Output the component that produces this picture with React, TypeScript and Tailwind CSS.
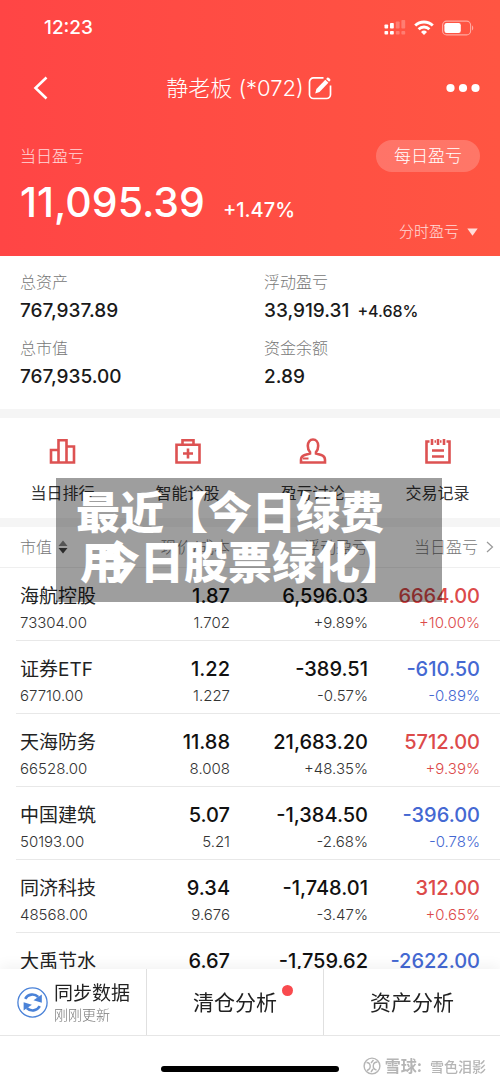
import type { ReactNode } from "react";
import clsx from "clsx";

type Tone = "up" | "down";

type Holding = {
  name: string;
  value: string;
  price: string;
  cost: string;
  pnl: string;
  pnlRate: string;
  day: string;
  dayRate: string;
  tone: Tone;
};

const holdings: Holding[] = [
  { name: "海航控股", value: "73304.00", price: "1.87", cost: "1.702", pnl: "6,596.03", pnlRate: "+9.89%", day: "6664.00", dayRate: "+10.00%", tone: "up" },
  { name: "证券ETF", value: "67710.00", price: "1.22", cost: "1.227", pnl: "-389.51", pnlRate: "-0.57%", day: "-610.50", dayRate: "-0.89%", tone: "down" },
  { name: "天海防务", value: "66528.00", price: "11.88", cost: "8.008", pnl: "21,683.20", pnlRate: "+48.35%", day: "5712.00", dayRate: "+9.39%", tone: "up" },
  { name: "中国建筑", value: "50193.00", price: "5.07", cost: "5.21", pnl: "-1,384.50", pnlRate: "-2.68%", day: "-396.00", dayRate: "-0.78%", tone: "down" },
  { name: "同济科技", value: "48568.00", price: "9.34", cost: "9.676", pnl: "-1,748.01", pnlRate: "-3.47%", day: "312.00", dayRate: "+0.65%", tone: "up" },
  { name: "大禹节水", value: "", price: "6.67", cost: "", pnl: "-1,759.62", pnlRate: "", day: "-2622.00", dayRate: "", tone: "down" },
];

function StatusBar() {
  return (
    <div className="flex h-14 items-center justify-between pl-11 pr-[26px]">
      <span className="text-[19px] font-medium">12:23</span>
      <div className="flex items-center gap-2">
        <svg width="22" height="16" viewBox="0 0 22 16" fill="currentColor">
          <rect x="0.5" y="4.5" width="3.6" height="4" rx="0.8" />
          <rect x="6" y="3" width="3.8" height="5.5" rx="0.8" />
          <rect x="11.8" y="1.5" width="3.8" height="7" rx="0.8" opacity="0.25" />
          <rect x="17.4" y="0" width="3.8" height="8.5" rx="0.8" opacity="0.25" />
          <rect x="0.5" y="11" width="3.6" height="3.6" rx="0.8" />
          <rect x="6" y="11" width="3.8" height="3.6" rx="0.8" />
          <rect x="11.8" y="11" width="3.8" height="3.6" rx="0.8" opacity="0.25" />
          <rect x="17.4" y="11" width="3.8" height="3.6" rx="0.8" opacity="0.25" />
        </svg>
        <svg width="20" height="16" viewBox="0 0 20 16" fill="none" stroke="currentColor" strokeWidth="2.8">
          <path d="M1.2 5.6a12.5 12.5 0 0 1 17.6 0" />
          <path d="M4.6 9.2a7.7 7.7 0 0 1 10.8 0" />
          <path d="M10 15l-3-3a4.3 4.3 0 0 1 6 0z" fill="currentColor" stroke="none" />
        </svg>
        <svg width="32" height="16" viewBox="0 0 32 16" fill="none">
          <rect x="0.6" y="1.1" width="28" height="13.8" rx="4" stroke="currentColor" strokeOpacity="0.5" strokeWidth="1.1" />
          <rect x="2.4" y="3" width="16.4" height="10" rx="2.2" fill="currentColor" />
          <path d="M30 5.6c1.6.6 1.6 4.2 0 4.8z" fill="currentColor" fillOpacity="0.5" />
        </svg>
      </div>
    </div>
  );
}

function NavBar() {
  return (
    <div className="flex h-16 items-center justify-between pl-8 pr-5">
      <button type="button" aria-label="返回" className="w-12">
        <svg width="18" height="26" viewBox="0 0 18 26" fill="none" stroke="currentColor" strokeWidth="2.6">
          <path d="M14.5 2.5L3.5 13l11 10.5" />
        </svg>
      </button>
      <div className="flex items-center gap-1">
        <h1 className="text-[22px] font-light leading-8">静老板 (*072)</h1>
        <button type="button" aria-label="编辑">
          <svg width="24" height="24" viewBox="0 0 24 24" fill="none">
            <path
              d="M15.5 1.9H5.5A4 4 0 0 0 1.500 5.9v12.6a4 4 0 0 0 4 4h13a4 4 0 0 0 4-4V9.5"
              stroke="currentColor"
              strokeWidth="1.7"
            />
            <path d="M7.2 17.5l1.2-4.4L17.3 3.8l3.1 3-8.9 9.2z" fill="currentColor" />
            <path d="M18.1 2.9l.9-1c.7-.7 1.4-.6 2 0l1 1c.6.6.6 1.3 0 1.9l-.9 1z" fill="currentColor" />
          </svg>
        </button>
      </div>
      <button type="button" aria-label="更多" className="flex w-[62px] justify-end">
        <svg width="34" height="10" viewBox="0 0 34 10" fill="currentColor">
          <circle cx="4.5" cy="5" r="4.1" />
          <circle cx="17" cy="5" r="4.1" />
          <circle cx="29.5" cy="5" r="4.1" />
        </svg>
      </button>
    </div>
  );
}

function Stat({ label, value, extra }: { label: string; value: string; extra?: string }) {
  return (
    <div>
      <dt className="text-[16px] font-light leading-6 text-[#777]">{label}</dt>
      <dd className="mt-[3px] text-[19px] font-medium leading-7 text-[#1a1a1a]">
        {value}
        {extra ? <span className="ml-2 text-[16px]">{extra}</span> : null}
      </dd>
    </div>
  );
}

function QuickAction({ label, children }: { label: string; children: ReactNode }) {
  return (
    <button type="button" className="flex flex-1 flex-col items-center justify-start gap-4">
      <svg width="28" height="28" viewBox="0 0 28 28" fill="none" stroke="#dd5252" strokeWidth="2.6">
        {children}
      </svg>
      <span className="text-[16px] leading-6 text-[#333]">{label}</span>
    </button>
  );
}

function Cell({ main, sub, tone, className }: { main: string; sub: string; tone?: Tone; className?: string }) {
  return (
    <td
      className={clsx(
        "h-[73px] border-b border-[#e8e8e8] p-0 text-right align-top",
        tone === "up" && "text-[#dc4a4a]",
        tone === "down" && "text-[#4468d2]",
        !tone && "text-[#111]",
        className,
      )}
    >
      <div className="pt-3.5 text-[20px] font-medium leading-7">{main}</div>
      <div className={clsx("text-[15px] font-light leading-[26px]", !tone && "text-[#333]")}>{sub}</div>
    </td>
  );
}

function HoldingsTable() {
  return (
    <table className="w-full table-fixed border-collapse">
      <thead>
        <tr className="h-10 border-b border-[#efefef] text-[16px] text-[#777]">
          <th className="p-0 pl-5 text-left font-light">
            <button type="button" className="flex items-center gap-1.5">
              市值
              <svg width="10" height="14" viewBox="0 0 10 14">
                <path d="M5 0.5L9.5 6h-9z" fill="#888" />
                <path d="M5 13.5L9.5 8h-9z" fill="#444" />
              </svg>
            </button>
          </th>
          <th className="w-[100px] p-0 text-right font-light">现价/成本</th>
          <th className="w-[138px] p-0 text-right font-light">浮动盈亏</th>
          <th className="w-[132px] p-0 pr-1.5 font-light">
            <button type="button" className="ml-auto flex items-center gap-2">
              当日盈亏
              <svg width="8" height="12" viewBox="0 0 8 12" fill="none" stroke="#999" strokeWidth="1.2">
                <path d="M1 1l5.5 5L1 11" />
              </svg>
            </button>
          </th>
        </tr>
      </thead>
      <tbody>
        {holdings.map((h) => (
          <tr key={h.name}>
            <td className="h-[73px] p-0 align-top">
              <div className="ml-4 h-[73px] border-b border-[#e8e8e8] pl-1 pt-4">
                <div className="text-[19px] leading-[26px] text-[#222]">{h.name}</div>
                <div className="text-[15px] font-light leading-[26px] text-[#333]">{h.value}</div>
              </div>
            </td>
            <Cell main={h.price} sub={h.cost} />
            <Cell main={h.pnl} sub={h.pnlRate} />
            <Cell main={h.day} sub={h.dayRate} tone={h.tone} className="pr-5!" />
          </tr>
        ))}
      </tbody>
    </table>
  );
}

function BottomBar() {
  return (
    <nav className="fixed inset-x-0 bottom-0 h-28 bg-white shadow-[0_-4px_12px_rgba(0,0,0,0.05)]">
      <div className="flex h-[67px] border-b border-[#e6e6e6]">
        <button type="button" className="flex w-[147px] items-center gap-1.5 border-r border-[#e0e0e0] pl-[17px] text-left">
          <svg width="31" height="31" viewBox="0 0 31 31" fill="none" className="shrink-0">
            <circle cx="15.5" cy="15.5" r="14.6" stroke="#4a82d8" strokeWidth="1.3" />
            <path d="M8.2 11.8a8.2 8.2 0 0 1 13-1.8" stroke="#4a82d8" strokeWidth="2.6" />
            <path d="M24.8 7.5v8.3l-8.3-2.6z" fill="#4a82d8" />
            <path d="M22.8 19.2a8.2 8.2 0 0 1-13 1.8" stroke="#4a82d8" strokeWidth="2.6" />
            <path d="M6.6 23.5v-8.3l8.3 2.6z" fill="#4a82d8" />
          </svg>
          <span className="pt-1">
            <span className="block text-[19px] leading-[22px] text-[#222]">同步数据</span>
            <span className="block text-[14px] font-light leading-5 text-[#777]">刚刚更新</span>
          </span>
        </button>
        <button type="button" className="flex flex-1 items-center justify-center border-r border-[#e0e0e0] pt-0.5 text-[21px] text-[#222]">
          <span className="relative">
            清仓分析
            <span className="absolute -right-4 -top-0.5 size-[11px] rounded-full bg-[#f94a4e]" />
          </span>
        </button>
        <button type="button" className="flex flex-1 items-center justify-center pt-0.5 text-[21px] text-[#222]">
          资产分析
        </button>
      </div>
      <div className="relative flex h-11 items-end justify-center pb-2">
        <div className="h-1.5 w-[178px] rounded-full bg-black" />
        <div className="absolute bottom-0.5 right-3.5 flex items-center gap-1 text-[#b5b5b5]">
          <svg width="18" height="18" viewBox="0 0 18 18" fill="none" stroke="currentColor" strokeWidth="1.4">
            <circle cx="9" cy="9" r="7.9" />
            <path d="M3.5 5.5c2.500 0 3.500 1.500 3.700 3.500s-1 3.500-3.200 4.500M14.500 5c-2.500 0-4 1.500-4.200 3.500s1 4 3.200 4.500M8 6l2.500-3M10 12l-2 3" />
          </svg>
          <span className="text-[16px] font-bold">雪球:</span>
          <span className="pl-1 text-[14px] font-medium">雪色泪影</span>
        </div>
      </div>
    </nav>
  );
}

function Caption() {
  return (
    <div className="pointer-events-none absolute left-14 right-[58px] top-[478px] z-10 h-[124px] bg-black/38 pl-5 pt-2.5 text-[44px] font-black leading-[50px] text-white">
      <div className="whitespace-nowrap">最近【今日绿费</div>
      <div className="whitespace-nowrap pl-1">
        <span>用</span>
        <span className="-ml-7">今日股票绿化】</span>
      </div>
    </div>
  );
}

export default function App() {
  return (
    <div className="relative min-h-screen bg-white font-['Inter','Noto_Sans_CJK_SC',sans-serif]">
      <header className="h-64 bg-linear-to-r from-[#ff4545] to-[#ff5542] text-white">
        <StatusBar />
        <NavBar />
        <div className="flex justify-between px-5 pt-5">
          <div>
            <div className="pt-1 text-[16px] font-light leading-6 text-white/80">当日盈亏</div>
            <div className="flex items-baseline gap-[18px] pt-2">
              <span className="text-[41px] font-medium leading-[52px]">11,095.39</span>
              <span className="text-[20px] font-medium">+1.47%</span>
            </div>
          </div>
          <div className="flex flex-col items-end">
            <button type="button" className="h-8 rounded-full bg-white/20 px-[18px] pt-0.5 text-[17px] font-light">
              每日盈亏
            </button>
            <button type="button" className="mt-12 flex items-center gap-2 text-[15px] font-light leading-6 text-white/80">
              分时盈亏
              <svg width="11" height="8" viewBox="0 0 11 8" fill="currentColor" className="mr-0.5">
                <path d="M0.3 0.5h10.4L5.5 7.7z" />
              </svg>
            </button>
          </div>
        </div>
      </header>

      <dl className="grid grid-cols-[244px_1fr] gap-y-[11px] px-5 pb-[18px] pt-3.5">
        <Stat label="总资产" value="767,937.89" />
        <Stat label="浮动盈亏" value="33,919.31" extra="+4.68%" />
        <Stat label="总市值" value="767,935.00" />
        <Stat label="资金余额" value="2.89" />
      </dl>

      <div className="h-[9px] bg-[#f5f5f5]" />

      <section className="flex h-[100px] items-start pt-[19px]">
        <QuickAction label="当日排行">
          <path d="M2 25.5V13h7.5v12.5M9.5 25.5V3.2h8v22.3M17.500 9.5H25v16M0.700 25.5h25.6" />
        </QuickAction>
        <QuickAction label="智能诊股">
          <path d="M2.5 7.8h23v17.7h-23zM8.5 7.8V3.2h11v4.6M14 11.5v10M9 16.500h10" />
        </QuickAction>
        <QuickAction label="盈亏讨论">
          <path d="M8.8 8.800C8.800 5 11 2.500 14 2.500s5.200 2.500 5.200 6.300c0 2.700-.8 4.900-2.200 6.400v1.300l5.200 1.600c2.600.9 3.800 2.600 3.800 5v2.400H2v-2.400c0-2.400 1.200-4.100 3.800-5L11 16.500v-1.300C9.600 13.700 8.800 11.500 8.800 8.800z" />
          <path d="M4 21.500h5.500" strokeWidth="2" />
        </QuickAction>
        <QuickAction label="交易记录">
          <path d="M5.500 4.500H2.500v21h23v-21h-3M8 2v6M14 2v6M20 2v6M10.500 4.500h1.500M16 4.500h1.500M8 13.500h12M8 19.500h12" />
        </QuickAction>
      </section>

      <div className="h-[9px] bg-[#f5f5f5]" />

      <HoldingsTable />
      <BottomBar />
      <Caption />
    </div>
  );
}
